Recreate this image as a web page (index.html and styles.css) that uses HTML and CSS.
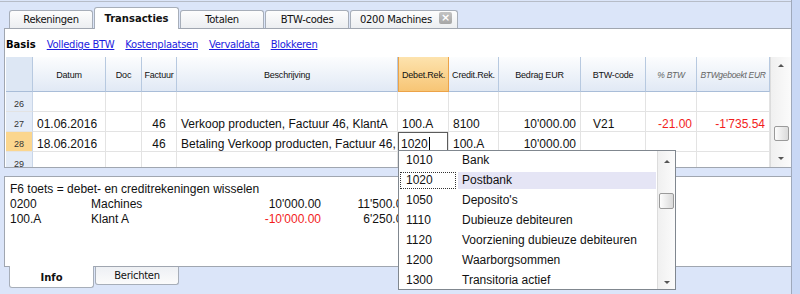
FILE: index.html
```html
<!DOCTYPE html>
<html lang="nl">
<head>
  <meta charset="UTF-8">
  <title>Transacties</title>
  <link rel="stylesheet" href="styles.css">
</head>
<body>

  <div class="window">
    <ul class="tabs">
      <li>Rekeningen</li>
      <li class="active">Transacties</li>
      <li>Totalen</li>
      <li>BTW-codes</li>
      <li class="closable">0200 Machines <span class="close">&times;</span></li>
    </ul>

    <section class="panel">
      <nav class="views">
        <b>Basis</b>
        <a href="#">Volledige BTW</a>
        <a href="#">Kostenplaatsen</a>
        <a href="#">Vervaldata</a>
        <a href="#">Blokkeren</a>
      </nav>

      <div class="grid-wrap">
        <table class="journal">
          <colgroup>
            <col style="width:27px"><col style="width:73px"><col style="width:36px"><col style="width:35px">
            <col style="width:221px"><col style="width:51px"><col style="width:50px"><col style="width:82px">
            <col style="width:65px"><col style="width:51px"><col style="width:73px">
          </colgroup>
          <tr class="head">
            <th class="num"></th>
            <th>Datum</th>
            <th>Doc</th>
            <th>Factuur</th>
            <th>Beschrijving</th>
            <th class="cur">Debet.Rek.</th>
            <th>Credit.Rek.</th>
            <th>Bedrag EUR</th>
            <th>BTW-code</th>
            <th class="calc">% BTW</th>
            <th class="calc">BTWgeboekt EUR</th>
          </tr>
          <tr>
            <td class="num">26</td><td></td><td></td><td></td><td></td><td></td><td></td><td></td><td></td><td></td><td></td>
          </tr>
          <tr>
            <td class="num">27</td>
            <td>01.06.2016</td>
            <td></td>
            <td class="mid">46</td>
            <td>Verkoop producten, Factuur 46, KlantA</td>
            <td>100.A</td>
            <td>8100</td>
            <td class="amt">10'000.00</td>
            <td class="code">V21</td>
            <td class="amt red">-21.00</td>
            <td class="amt red">-1'735.54</td>
          </tr>
          <tr>
            <td class="num sel">28</td>
            <td>18.06.2016</td>
            <td></td>
            <td class="mid">46</td>
            <td>Betaling Verkoop producten, Factuur 46, KlantA</td>
            <td class="edit">1020<span class="caret"></span></td>
            <td>100.A</td>
            <td class="amt">10'000.00</td>
            <td></td>
            <td></td>
            <td></td>
          </tr>
          <tr>
            <td class="num">29</td><td></td><td></td><td></td><td></td><td></td><td></td><td></td><td></td><td></td><td></td>
          </tr>
        </table>

        <div class="vscroll">
          <span class="arrow up"></span>
          <span class="thumb grid-thumb"></span>
          <span class="arrow down"></span>
        </div>
      </div>
    </section>

    <section class="info">
      <p>F6 toets = debet- en creditrekeningen wisselen</p>
      <div class="balance">
        <span>0200</span><span>Machines</span><span class="amt">10'000.00</span><span class="amt">11'500.00</span>
        <span>100.A</span><span>Klant A</span><span class="amt red">-10'000.00</span><span class="amt">6'250.00</span>
      </div>
    </section>

    <ul class="tabs bottom">
      <li class="active">Info</li>
      <li>Berichten</li>
    </ul>
  </div>

  <div class="edge"></div>

  <!-- account picker opened on the Debet cell -->
  <div class="dropdown">
    <ul>
      <li><span class="acc">1010</span><span class="desc">Bank</span></li>
      <li class="picked"><span class="acc">1020</span><span class="desc">Postbank</span></li>
      <li><span class="acc">1050</span><span class="desc">Deposito's</span></li>
      <li><span class="acc">1110</span><span class="desc">Dubieuze debiteuren</span></li>
      <li><span class="acc">1120</span><span class="desc">Voorziening dubieuze debiteuren</span></li>
      <li><span class="acc">1200</span><span class="desc">Waarborgsommen</span></li>
      <li><span class="acc">1300</span><span class="desc">Transitoria actief</span></li>
    </ul>
    <div class="vscroll small">
      <span class="arrow up"></span>
      <span class="thumb list-thumb"></span>
      <span class="arrow down"></span>
    </div>
  </div>

</body>
</html>
```

FILE: styles.css
```css
* {
  box-sizing: border-box;
}

body {
  margin: 0;
  height: 294px;
  display: flex;
  overflow: hidden;
  background: #dbe5f9;
  font-family: 'Liberation Sans', Arial, sans-serif;
  font-size: 12px;
  color: #111;
}

.window {
  width: 791px;
  padding-top: 1px;
}

.edge {
  flex: 1;
  border-left: 1px solid #9fa9bb;
  background: #c9d8f5;
}

/* tab strips */

.tabs {
  list-style: none;
  margin: 0;
  padding: 0 0 0 9px;
  height: 27px;
  display: flex;
  align-items: flex-end;
  border-top: 1px solid #b6bcc8;
  font-family: 'DejaVu Sans', sans-serif;
  font-size: 10px;
  letter-spacing: -0.3px;
}

.tabs li {
  width: 84px;
  height: 18px;
  margin-right: 1px;
  border: 1px solid #a7aeb9;
  border-bottom: 0;
  border-radius: 3px 3px 0 0;
  background: linear-gradient(#fdfdfd, #eceef1);
  text-align: center;
  line-height: 17px;
}

.tabs li.active {
  position: relative;
  z-index: 1;
  width: 85px;
  height: 22px;
  margin-bottom: -1px;
  background: #fff;
  font-weight: bold;
  letter-spacing: 0;
  line-height: 21px;
}

.tabs li.closable {
  width: 108px;
  display: flex;
  padding: 0 5px 0 9px;
}

.close {
  width: 13px;
  height: 12px;
  margin: 1px 0 0 auto;
  border-radius: 2px;
  background: linear-gradient(#c4c4c4, #a6a6a6);
  color: #fff;
  font-family: 'DejaVu Sans', sans-serif;
  font-weight: bold;
  font-size: 11px;
  line-height: 12px;
  letter-spacing: 0;
  text-align: center;
}

.tabs.bottom {
  height: 22px;
  border-top: 0;
  align-items: flex-start;
}

.tabs.bottom li {
  height: 18px;
  border: 1px solid #a7aeb9;
  border-top: 0;
  border-radius: 0 0 3px 3px;
  background: linear-gradient(#eef0f4, #fbfbfb);
  line-height: 17px;
}

.tabs.bottom li.active {
  height: 22px;
  margin: -1px 1px 0 0;
  background: #fff;
  line-height: 23px;
}

/* upper panel */

.panel {
  margin-left: 4px;
  height: 140px;
  background: #fff;
  border: 1px solid #a0a6b0;
  border-right: 0;
}

.views {
  height: 28px;
  padding: 9px 0 0 1px;
  display: flex;
  gap: 11px;
  font-family: 'DejaVu Sans', sans-serif;
  font-size: 10px;
  line-height: 14px;
}

.views b {
  color: #000;
}

.views a {
  color: #1c1ce0;
  letter-spacing: -0.3px;
}

.grid-wrap {
  height: 110px;
  padding-left: 1px;
  display: flex;
  overflow: hidden;
}

.journal {
  width: 764px;
  table-layout: fixed;
  border-collapse: separate;
  border-spacing: 0;
}

.journal tr {
  height: 20px;
}

.journal tr.head {
  height: 35px;
}

.journal th {
  padding: 13px 0 0;
  vertical-align: top;
  border-right: 1px solid #b7c9e0;
  border-bottom: 1px solid #a9bdd8;
  background: linear-gradient(#fcfdfe, #e1e9f5);
  font-size: 9px;
  font-weight: normal;
  line-height: 11px;
  color: #111;
  letter-spacing: -0.2px;
  white-space: nowrap;
  overflow: hidden;
}

.journal th.num {
  background: #dde7f4;
}

.journal th.cur {
  background: linear-gradient(#fde3ae, #f7c575);
  border-left: 1px solid #eca348;
  border-right: 1px solid #eca348;
  border-bottom-color: #eca348;
}

.journal th.calc {
  font-style: italic;
  font-size: 8.5px;
  letter-spacing: -0.3px;
  color: #666;
}

.journal td {
  padding: 5px 4px 0;
  vertical-align: top;
  line-height: 14px;
  border-right: 1px solid #e3e3e3;
  border-bottom: 1px solid #e3e3e3;
  white-space: nowrap;
  overflow: hidden;
}

.journal td.num {
  padding: 5px 0 0;
  text-align: center;
  font-size: 9px;
  background: #e3ebf7;
  border-right-color: #c9d6e8;
  color: #333;
}

.journal td.sel {
  background: #fbd68e;
}

.journal td.mid {
  text-align: center;
}

.journal td.amt {
  text-align: right;
}

.journal td.code {
  padding-left: 12px;
}

.journal td.edit {
  padding-left: 3px;
  box-shadow: inset 0 0 0 1px #5c5c5c;
}

.caret {
  display: inline-block;
  width: 1px;
  height: 13px;
  margin-left: 1px;
  vertical-align: -2px;
  background: #000;
}

.red {
  color: #f21d1d;
}

/* scrollbars */

.vscroll {
  flex: 1;
  display: flex;
  flex-direction: column;
  align-items: center;
  border-left: 1px solid #dcdcdc;
  background: linear-gradient(to right, #f0f0f0, #fbfbfb);
}

.arrow {
  width: 0;
  height: 0;
  border-left: 3px solid transparent;
  border-right: 3px solid transparent;
}

.arrow.up {
  margin-top: 7px;
  border-bottom: 3px solid #555;
}

.arrow.down {
  margin-top: 16px;
  border-top: 3px solid #555;
}

.thumb {
  width: 15px;
  height: 15px;
  border: 1px solid #9a9a9a;
  border-radius: 2px;
  background: linear-gradient(to right, #fdfdfd, #dadada);
}

.grid-thumb {
  margin-top: 59px;
}

/* info panel */

.info {
  margin: 8px 0 0 4px;
  height: 91px;
  padding: 5px 0 0 5px;
  background: #fff;
  border: 1px solid #a0a6b0;
  border-right: 0;
  line-height: 15px;
}

.info p {
  margin: 0;
}

.balance {
  display: grid;
  grid-template-columns: 81px 170px 60px 88px;
}

.balance .amt {
  text-align: right;
}

/* account dropdown */

.dropdown {
  position: absolute;
  left: 398px;
  top: 150px;
  width: 278px;
  height: 140px;
  display: flex;
  background: #fff;
  border: 1px solid #80878f;
}

.dropdown ul {
  width: 258px;
  list-style: none;
  margin: -1px 0 0;
  padding: 0;
}

.dropdown li {
  height: 20px;
  display: flex;
  align-items: center;
}

.acc {
  width: 56px;
  height: 17px;
  margin: 1px 0 0 1px;
  padding-left: 5px;
  border: 1px solid transparent;
  line-height: 15px;
}

.desc {
  flex: 1;
  height: 17px;
  margin: 1px 1px 0 2px;
  padding-left: 4px;
  line-height: 17px;
}

.picked .acc {
  border: 1px dotted #333;
}

.picked .desc {
  background: #e5e5f5;
}

.vscroll.small .arrow.up {
  margin-top: 9px;
}

.list-thumb {
  margin-top: 30px;
  height: 16px;
}

.vscroll.small .arrow.down {
  margin-top: 72px;
}
```
